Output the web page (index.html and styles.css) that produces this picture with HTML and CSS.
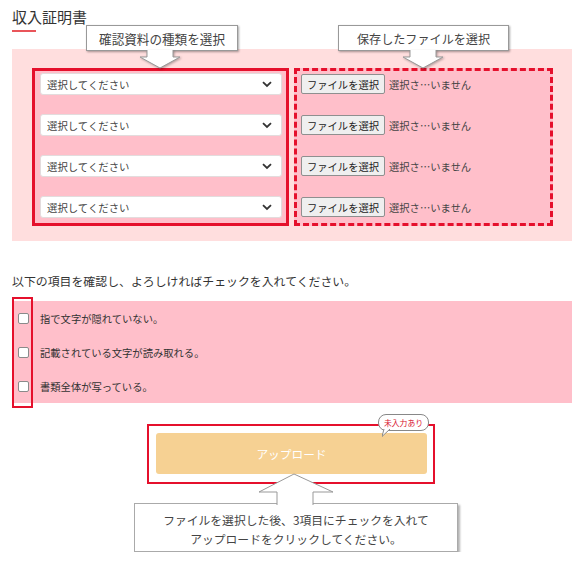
FILE: index.html
```html
<!DOCTYPE html>
<html lang="ja">
<head>
<meta charset="utf-8">
<title>収入証明書</title>
<link rel="stylesheet" href="styles.css">
</head>
<body>
<div class="page">
  <h2 class="title">収入証明書</h2>
  <div class="title-bar"></div>

  <div class="panel">
    <div class="box box-solid">
      <div class="row"><div class="select"><span>選択してください</span><svg class="chev" width="10" height="7" viewBox="0 0 10 7"><polyline points="1,1.2 5,5 9,1.2" fill="none" stroke="#333" stroke-width="1.8"/></svg></div></div>
      <div class="row"><div class="select"><span>選択してください</span><svg class="chev" width="10" height="7" viewBox="0 0 10 7"><polyline points="1,1.2 5,5 9,1.2" fill="none" stroke="#333" stroke-width="1.8"/></svg></div></div>
      <div class="row"><div class="select"><span>選択してください</span><svg class="chev" width="10" height="7" viewBox="0 0 10 7"><polyline points="1,1.2 5,5 9,1.2" fill="none" stroke="#333" stroke-width="1.8"/></svg></div></div>
      <div class="row"><div class="select"><span>選択してください</span><svg class="chev" width="10" height="7" viewBox="0 0 10 7"><polyline points="1,1.2 5,5 9,1.2" fill="none" stroke="#333" stroke-width="1.8"/></svg></div></div>
    </div>
    <div class="box box-dashed">
      <div class="row"><span class="file-btn">ファイルを選択</span><span class="file-name">選択さ…いません</span></div>
      <div class="row"><span class="file-btn">ファイルを選択</span><span class="file-name">選択さ…いません</span></div>
      <div class="row"><span class="file-btn">ファイルを選択</span><span class="file-name">選択さ…いません</span></div>
      <div class="row"><span class="file-btn">ファイルを選択</span><span class="file-name">選択さ…いません</span></div>
    </div>
  </div>

  <p class="notice">以下の項目を確認し、よろしければチェックを入れてください。</p>

  <div class="checks">
    <label class="check-row"><input type="checkbox" class="chk"><span>指で文字が隠れていない。</span></label>
    <label class="check-row"><input type="checkbox" class="chk"><span>記載されている文字が読み取れる。</span></label>
    <label class="check-row"><input type="checkbox" class="chk"><span>書類全体が写っている。</span></label>
    <div class="check-frame"></div>
  </div>

  <div class="upload-frame">
    <div class="upload-btn">アップロード</div>
    <div class="badge">未入力あり
      <svg class="badge-tail" width="10" height="8" viewBox="0 0 10 8"><path d="M2,0 L0,7.5 L8,0" fill="#fff" stroke="#888" stroke-width="1"/></svg>
    </div>
  </div>

  <div class="guide">
    <svg class="guide-arrow" width="76" height="32" viewBox="0 0 76 32">
      <polygon points="19,32 19,19 1,19 36,1 75,19 55,19 55,32" fill="#fff"/>
      <polyline points="19,32 19,19 1,19 36,1 75,19 55,19 55,32" fill="none" stroke="#999" stroke-width="1"/>
    </svg>
    ファイルを選択した後、3項目にチェックを入れて<br>アップロードをクリックしてください。
  </div>

  <div class="callout callout-1">確認資料の種類を選択</div>
  <svg class="arrow-down arrow-1" width="42" height="19" viewBox="0 0 42 19">
    <polygon points="8,0 8,7 1,7 21,18 41,7 34,7 34,0" fill="#fff"/>
    <polyline points="8,0 8,7 1,7 21,18 41,7 34,7 34,0" fill="none" stroke="#999" stroke-width="1"/>
  </svg>
  <div class="callout callout-2">保存したファイルを選択</div>
  <svg class="arrow-down arrow-2" width="42" height="19" viewBox="0 0 42 19">
    <polygon points="8,0 8,7 1,7 21,18 41,7 34,7 34,0" fill="#fff"/>
    <polyline points="8,0 8,7 1,7 21,18 41,7 34,7 34,0" fill="none" stroke="#999" stroke-width="1"/>
  </svg>
</div>
</body>
</html>
```
FILE: styles.css
```css
* { box-sizing: border-box; }
body {
  margin: 0;
  background: #fff;
  font-family: "Noto Sans CJK JP", "Noto Sans", sans-serif;
  color: #333;
}
.page {
  position: relative;
  width: 585px;
  padding: 6px 13px 0 12px;
}
.title {
  margin: 0;
  font-size: 15px;
  line-height: 21px;
  font-weight: normal;
  color: #333;
}
.title-bar {
  width: 24px;
  height: 2px;
  margin-top: 3px;
  background: #e9555a;
}
.panel {
  margin-top: 17px;
  background: #ffdede;
  padding: 19px 19px 15px 20px;
  display: grid;
  grid-template-columns: 257px 259px;
  column-gap: 5px;
}
.box {
  background: #ffbfca;
  display: flex;
  flex-direction: column;
  gap: 19px;
  padding: 2px 4px 5px 5px;
}
.box-solid { border: 3px solid #e5102c; }
.box-dashed { border: 3px dashed #e5102c; padding-left: 4px; }
.row {
  height: 22px;
  display: flex;
  align-items: center;
}
.select {
  width: 100%;
  height: 22px;
  background: #fff;
  border: 1px solid #e3dcdd;
  border-radius: 3px;
  display: flex;
  align-items: center;
  justify-content: space-between;
  padding: 0 9px 0 6px;
  font-size: 10.4px;
  color: #444;
}
.chev { display: block; }
.file-btn {
  height: 20px;
  width: 84px;
  display: flex;
  align-items: center;
  justify-content: center;
  background: #efefef;
  border: 1px solid #8f8f8f;
  border-radius: 2px;
  font-size: 10.3px;
  color: #222;
}
.file-name {
  margin-left: 4px;
  font-size: 10.3px;
  color: #444;
}
.notice {
  margin: 31px 0 0;
  font-size: 11.9px;
  line-height: 18px;
  color: #333;
}
.checks {
  position: relative;
  margin-top: 11px;
  background: #ffbfca;
}
.check-row {
  height: 34px;
  display: flex;
  align-items: center;
  gap: 11px;
  padding-left: 6px;
  font-size: 10.3px;
  color: #333;
}
.chk {
  appearance: none;
  -webkit-appearance: none;
  margin: 0;
  width: 11px;
  height: 11px;
  background: #fff;
  border: 1px solid #8a8a8a;
  border-radius: 2px;
}
.check-frame {
  position: absolute;
  left: 0;
  top: -4px;
  bottom: -5px;
  width: 21px;
  border: 2px solid #e5102c;
}
.upload-frame {
  position: relative;
  margin: 21px 0 0 135px;
  width: 288px;
  border: 2px solid #e5102c;
  padding: 7px 6px 8px 7px;
}
.upload-btn {
  height: 41px;
  background: #f6d193;
  border-radius: 3px;
  display: flex;
  align-items: center;
  justify-content: center;
  color: #fff;
  font-size: 11.7px;
}
.badge {
  position: absolute;
  left: 229px;
  top: -12px;
  width: 51px;
  height: 17px;
  background: #fff;
  border: 1px solid #888;
  border-radius: 8px;
  display: flex;
  align-items: center;
  justify-content: center;
  font-size: 7.8px;
  color: #d8102c;
}
.badge-tail {
  position: absolute;
  left: 3px;
  top: 14px;
}
.guide {
  position: relative;
  margin: 19px 0 0 122px;
  width: 324px;
  height: 49px;
  background: #fff;
  border: 1px solid #aaa;
  box-shadow: 2px 2px 2px rgba(0, 0, 0, 0.3);
  padding-top: 6px;
  text-align: center;
  font-size: 11.8px;
  line-height: 19px;
  color: #444;
}
.guide-arrow {
  position: absolute;
  left: 123px;
  top: -31px;
  overflow: visible;
}
.callout {
  position: absolute;
  top: 25px;
  height: 26px;
  background: #fff;
  border: 1px solid #999;
  box-shadow: 1px 1px 2px rgba(0, 0, 0, 0.35);
  display: flex;
  align-items: center;
  justify-content: center;
  font-size: 12.6px;
  color: #444;
}
.callout-1 { left: 86px; width: 152px; }
.callout-2 { left: 338px; width: 171px; font-size: 12.1px; }
.arrow-down {
  position: absolute;
  top: 50px;
  overflow: visible;
  filter: drop-shadow(1px 1px 1px rgba(0, 0, 0, 0.3));
}
.arrow-1 { left: 139px; }
.arrow-2 { left: 402px; }
```
